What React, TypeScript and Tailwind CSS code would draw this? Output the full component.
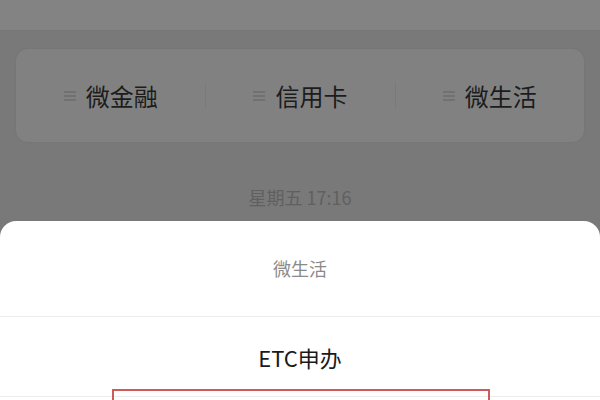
import { Fragment } from 'react'

const tabs = ['微金融', '信用卡', '微生活']

function MenuIcon() {
  return (
    <svg width="12" height="10" viewBox="0 0 12 10" className="shrink-0">
      <path d="M0 1h12M0 5h12M0 9h12" stroke="#626262" strokeWidth="1.2" />
    </svg>
  )
}

export default function App() {
  return (
    <div
      className="relative flex h-[400px] w-[600px] flex-col overflow-hidden bg-[#797979]"
      style={{ fontFamily: '"Noto Sans CJK SC", "Noto Sans", sans-serif' }}
    >
      {/* chat header */}
      <div className="h-[31px] shrink-0 border-b border-[#767676] bg-[#838383]" />

      {/* official account menu card */}
      <div className="mx-4 mt-[18px] grid h-[93px] shrink-0 grid-cols-3 items-center rounded-xl bg-[#818181] shadow-[0_0_2px_rgba(0,0,0,0.08)]">
        {tabs.map((t, i) => (
          <Fragment key={t}>
            <div
              className={
                'flex h-[27px] items-center justify-center gap-[10px] ' +
                (i > 0 ? 'border-l border-[#7a7a7a]' : '')
              }
            >
              <MenuIcon />
              <span className="text-[24px] leading-none text-[#1c1c1c]">{t}</span>
            </div>
          </Fragment>
        ))}
      </div>

      <div
        className="mt-[43px] text-center text-[18px] leading-[24px] text-[#606060]"
        style={{ fontFamily: '"Noto Sans CJK SC", "Liberation Sans", sans-serif' }}
      >
        星期五 17:16
      </div>

      {/* action sheet */}
      <div className="mt-[12px] flex-1 rounded-t-2xl bg-white">
        <div className="flex h-[95px] items-center justify-center text-[18px] text-[#8a8a8a]">
          微生活
        </div>
        <div className="h-[81px] border-y border-[#ececec]">
          <div className="mt-[26px] text-center text-[22px] leading-[28px] text-[#1a1a1a]">
            ETC申办
          </div>
        </div>
      </div>

      {/* highlight annotation */}
      <div className="absolute left-[112px] top-[389px] h-[30px] w-[378px] border-2 border-[#cf5a5a]" />
    </div>
  )
}
